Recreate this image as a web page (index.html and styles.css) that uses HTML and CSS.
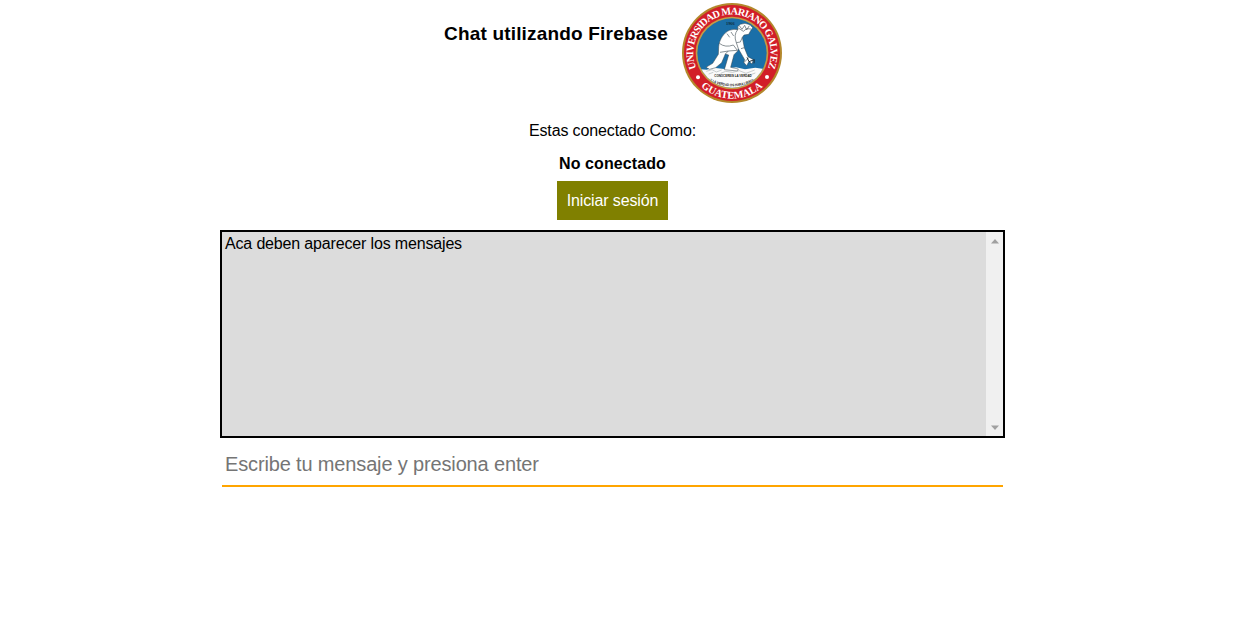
FILE: index.html
```
<!DOCTYPE html>
<html lang="es">
<head>
<meta charset="utf-8">
<title>Chat utilizando Firebase</title>
<link rel="stylesheet" href="styles.css">
</head>
<body>
<main class="chat">
  <header class="header">
    <h1 class="title">Chat utilizando Firebase</h1>
    <svg class="seal" viewBox="18 9 300 300" role="img" aria-label="Universidad Mariano Galvez">
      <defs>
        <path id="arc-top" d="M62.200 207A116 116 0 1 1 273.800 207"/>
        <path id="arc-bottom" d="M72 257A138 138 0 0 0 264 257"/>
        <path id="motto" d="M101 242Q168 276 238 242"/>
        <clipPath id="disc"><circle cx="168" cy="159" r="104"/></clipPath>
      </defs>
      <circle cx="168" cy="159" r="150" fill="#b3872b"/>
      <circle cx="168" cy="159" r="144" fill="#d21e28"/>
      <circle cx="168" cy="159" r="109" fill="#c49a45"/>
      <circle cx="168" cy="159" r="104" fill="#1b6fa8"/>
      <g clip-path="url(#disc)">
        <path d="M60 207L92 209L112 203L145 207L180 202L207 208L238 203L280 210V280H60Z" fill="#fafafa"/>
        <path d="M128 140C130 118 144 98 160 91Q174 86 186 89L185 80L193 73L207 70L222 74L230 83L224 92L218 103L204 105L199 112L205 143L216 170L232 179L228 192L219 184L212 197L203 187L206 179L187 146L185 153L174 164L164 202L187 207L184 213L145 209L158 165L148 162L137 188L119 203L101 208L90 202L110 190L127 163Z" fill="#fff" stroke="#34424a" stroke-width="1.500"/>
        <path d="M130 130Q148 144 172 135L184 151Q156 152 132 157M185 89Q172 105 181 128L193 126L199 112M181 128L187 146M190 77L198 88L206 76L212 90L220 77M187 84L202 94L212 86L225 87M204 187L218 174M148 162L157 153M153 101L161 112M165 96L173 108M205 143L195 146" fill="none" stroke="#4e5a60" stroke-width="2"/>
        <path d="M219 185L213 172M219 185L235 179L234 190" fill="none" stroke="#233038" stroke-width="3"/>
        <path d="M91 214L108 209L121 216L137 210M134 220L149 214L170 217L190 212L210 220L236 210M98 222L112 217M218 226L238 219" fill="none" stroke="#adb5b6" stroke-width="2"/>
        <text class="caption" x="115" y="231" textLength="112" lengthAdjust="spacingAndGlyphs">CONOCEREIS LA VERDAD</text>
        <text class="caption"><textPath href="#motto" textLength="140" lengthAdjust="spacingAndGlyphs">Y LA VERDAD OS HARA LIBRES</textPath></text>
      </g>
      <text class="year" x="150" y="76" textLength="26">1966</text>
      <text class="legend"><textPath href="#arc-top" startOffset="3" textLength="456">UNIVERSIDAD MARIANO GALVEZ</textPath></text>
      <text class="legend"><textPath href="#arc-bottom" startOffset="4" textLength="204">GUATEMALA</textPath></text>
      <circle cx="66" cy="232" r="6" fill="#fff"/>
      <circle cx="273" cy="231" r="6" fill="#fff"/>
    </svg>
  </header>
  <p class="status">Estas conectado Como:</p>
  <p class="user">No conectado</p>
  <button class="login" type="button">Iniciar sesión</button>
  <section class="messages">
    <div class="message-list">Aca deben aparecer los mensajes</div>
    <div class="scrollbar">
      <svg class="arrow" viewBox="0 0 8 5"><path d="M0 4.500L4 0L8 4.500Z"/></svg>
      <svg class="arrow" viewBox="0 0 8 5"><path d="M0 .5L4 5L8 .5Z"/></svg>
    </div>
  </section>
  <input class="compose" type="text" placeholder="Escribe tu mensaje y presiona enter">
</main>
</body>
</html>
```
FILE: styles.css
```
* { box-sizing: border-box; }
body {
  margin: 0;
  background: #fff;
  color: #000;
  font: 16px/18px "Liberation Sans", Arial, sans-serif;
}
.chat {
  width: 785px;
  margin-left: 220px;
  padding-top: 3px;
  display: flex;
  flex-direction: column;
  align-items: center;
}
.header { display: flex; gap: 14px; width: 339px; height: 100px; }
.title {
  width: 225px;
  margin: 20px 0 0;
  padding-left: 1px;
  font-size: 19px;
  line-height: 22px;
  letter-spacing: .18px;
  white-space: nowrap;
}
.seal { width: 100px; height: 100px; }
.legend { font: bold 31px "Liberation Serif", serif; fill: #fff; }
.year { font: bold 13px "Liberation Serif", serif; fill: #102b3a; }
.caption { font: bold 11px "Liberation Sans", sans-serif; fill: #151515; }
.status { margin: 19px 0 0; letter-spacing: -.13px; }
.user { margin: 15px 0 0; font-weight: bold; letter-spacing: .09px; }
.login {
  width: 111px;
  height: 39px;
  margin: 8px 0 10px;
  padding: 0;
  border: 0;
  background: #808000;
  color: #fff;
  font: inherit;
  letter-spacing: -.13px;
  white-space: nowrap;
}
.messages {
  display: flex;
  width: 785px;
  height: 208px;
  border: 2px solid #000;
  background: #dcdcdc;
}
.message-list { flex: 1; padding: 3px; letter-spacing: -.16px; }
.scrollbar {
  width: 17px;
  padding: 7px 0 6px;
  display: flex;
  flex-direction: column;
  align-items: center;
  justify-content: space-between;
  background: #f0f0f0;
}
.arrow { width: 8px; height: 5px; fill: #a0a0a0; }
.compose {
  width: 781px;
  height: 45px;
  margin-top: 4px;
  padding: 2px 3px 0;
  border: 0;
  border-bottom: 2px solid #ffa500;
  outline: 0;
  font: 20px/23px "Liberation Sans", Arial, sans-serif;
  letter-spacing: -.15px;
}
.compose::placeholder { color: #757575; opacity: 1; }
```
